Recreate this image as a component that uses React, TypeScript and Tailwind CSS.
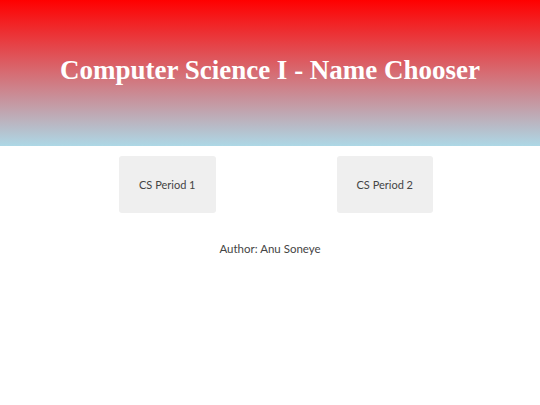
export default function App() {
  const periods = ["CS Period 1", "CS Period 2"];

  return (
    <main className="min-h-screen bg-white">
      <header className="h-[146px] flex items-center justify-center bg-[linear-gradient(to_bottom,#ff0000,#add8e6)]">
        <h1 className="text-[27px] font-bold text-white font-['Liberation_Serif',serif] -mt-[6px]">
          Computer Science I - Name Chooser
        </h1>
      </header>

      <section className="flex pl-[119px] gap-[121px] mt-[10px]">
        {periods.map((p) => (
          <button
            key={p}
            className="h-[57px] px-[20px] pt-px rounded-[3px] bg-[#efefef] text-[11px] text-[#444] font-['Lato',sans-serif]"
          >
            {p}
          </button>
        ))}
      </section>

      <p className="mt-[27px] text-center text-[11.5px] text-[#444] font-['Lato',sans-serif]">
        Author: Anu Soneye
      </p>
    </main>
  );
}
